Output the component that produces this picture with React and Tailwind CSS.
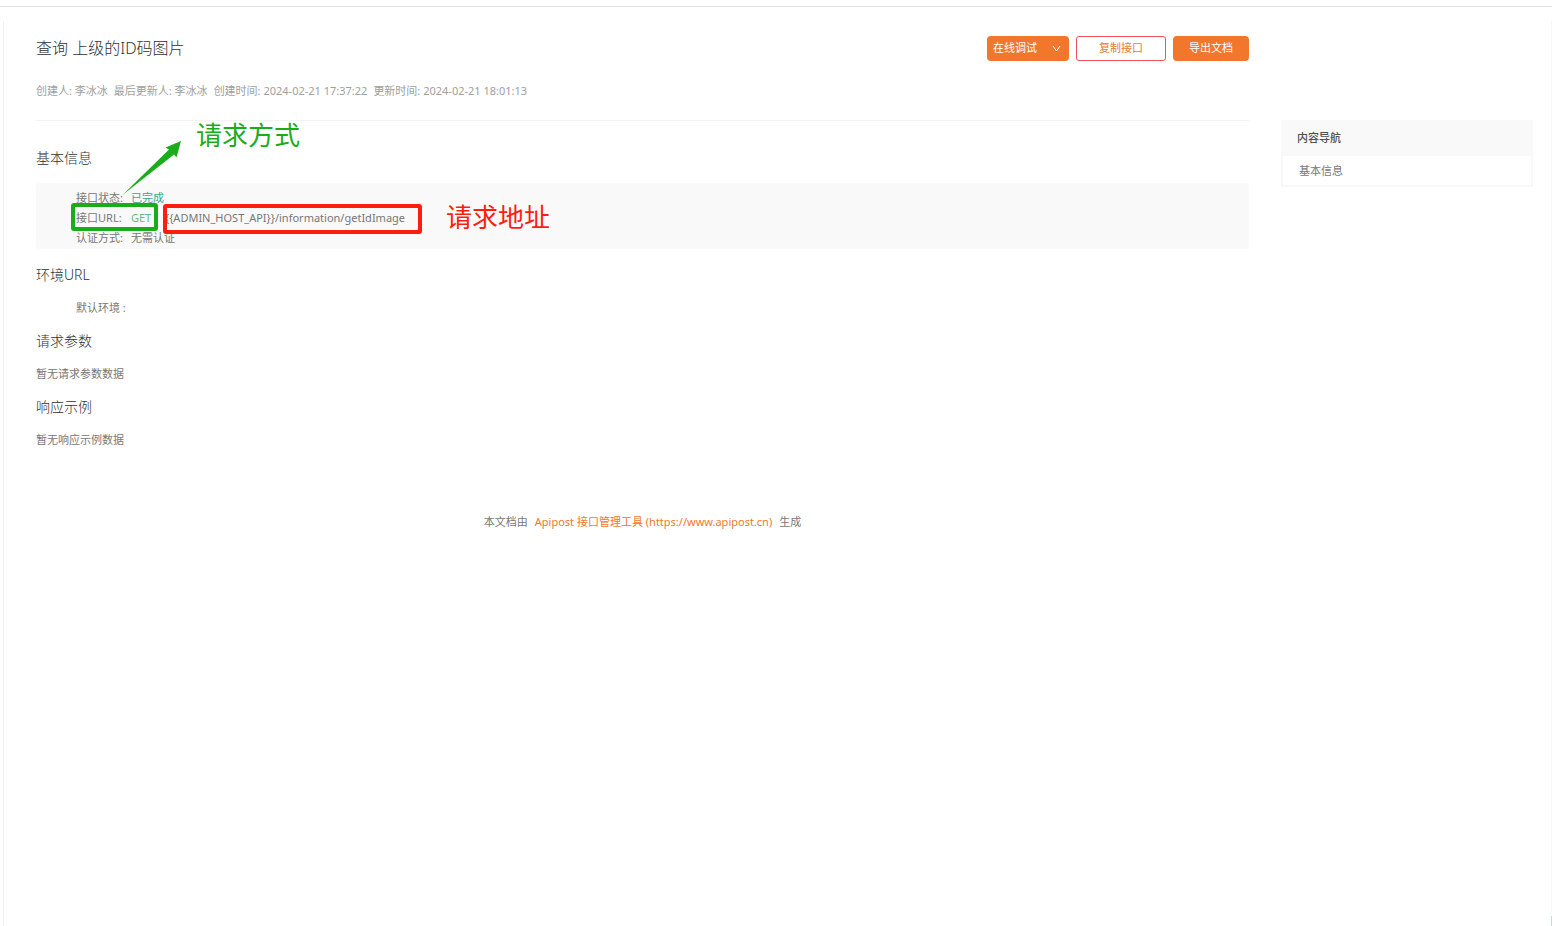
function Section({ title, children }) {
  return (
    <section className="leading-[33px]">
      <h2 className="text-sm font-light leading-[33px] text-[#303030]">{title}</h2>
      {children}
    </section>
  );
}

function InfoRow({ label, children }) {
  return (
    <div className="flex h-5">
      <dt className="w-[55px] shrink-0">{label}:</dt>
      <dd className="flex">{children}</dd>
    </div>
  );
}

function Annotations() {
  return (
    <>
      <span className="absolute left-[35px] top-5 h-7 w-[87px] rounded-[3px] border-4 border-[#1aad19]" />
      <span className="absolute left-[127px] top-[21px] h-[30px] w-[259px] rounded-[3px] border-4 border-[#ff1d10]" />
      <svg
        className="absolute left-[86px] -top-11 text-[#1aad19]"
        width="62"
        height="58"
        viewBox="0 0 62 58"
        fill="currentColor"
        aria-hidden="true"
      >
        <path d="M59 2 L43.5 8.5 L47 10.5 L0.5 56 L52 15.5 L54.5 18.5 Z" />
      </svg>
      <span className="absolute left-40 -top-16 whitespace-nowrap text-[26px] leading-8 text-[#1aad19]">
        请求方式
      </span>
      <span className="absolute left-[410px] top-[18px] whitespace-nowrap text-[26px] leading-8 text-[#ff1d10]">
        请求地址
      </span>
    </>
  );
}

export default function App() {
  return (
    <div className="relative flex min-h-screen flex-col bg-white pl-[3px] font-['Noto_Sans','Noto_Sans_CJK_SC',sans-serif] text-[11px] text-[#777]">
      <div className="-ml-[3px] mb-3.5 h-[7px] border-b border-[#e0e0e0]" />
      <div className="flex flex-1 items-start gap-8 border-x border-l-[#f2f2f2] border-r-[#f7f7f7] pl-8 pr-[18px] pt-[15px]">
        <main className="min-w-0 flex-1">
          <header className="border-b border-[#f2f3f5] pb-[19px]">
            <div className="flex h-[25px] items-start justify-between">
              <h1 className="text-base font-light leading-6 text-[#303030]">查询 上级的ID码图片</h1>
              <div className="flex gap-[7px]">
                <button
                  type="button"
                  className="flex h-[25px] w-[82px] items-center justify-between rounded bg-[#f0772b] pl-1.5 pr-2 text-white"
                >
                  在线调试
                  <svg width="9" height="9" viewBox="0 0 9 9" fill="none" stroke="currentColor" aria-hidden="true">
                    <path d="M1 2 L4.5 7 L8 2" />
                  </svg>
                </button>
                <button
                  type="button"
                  className="h-[25px] w-[90px] rounded-[3px] border border-[#f0525a] text-[#f0772b]"
                >
                  复制接口
                </button>
                <button type="button" className="h-[25px] w-[76px] rounded bg-[#f0772b] text-white">
                  导出文档
                </button>
              </div>
            </div>
            <div className="mt-5 flex gap-1.5 leading-5 text-[#a0a0a0]">
              <span>创建人: 李冰冰</span>
              <span>最后更新人: 李冰冰</span>
              <span>创建时间: 2024-02-21 17:37:22</span>
              <span>更新时间: 2024-02-21 18:01:13</span>
            </div>
          </header>

          <h2 className="mt-5 text-sm font-light leading-[33px] text-[#303030]">基本信息</h2>
          <div className="relative mb-[9px] mt-[9px] rounded bg-[#f9f9f9] pb-px pl-10 pt-[5px]">
            <dl className="leading-5">
              <InfoRow label="接口状态">
                <span className="text-[#3ba48d]">已完成</span>
              </InfoRow>
              <InfoRow label="接口URL">
                <span className="w-[34px] text-[#6aba7c]">GET</span>
                <span>{"{{ADMIN_HOST_API}}/information/getIdImage"}</span>
              </InfoRow>
              <InfoRow label="认证方式">无需认证</InfoRow>
            </dl>
            <Annotations />
          </div>

          <Section title="环境URL">
            <p className="pl-10">默认环境 :</p>
          </Section>
          <Section title="请求参数">
            <p>暂无请求参数数据</p>
          </Section>
          <Section title="响应示例">
            <p>暂无响应示例数据</p>
          </Section>

          <footer className="mt-14 flex justify-center gap-[7px] leading-5">
            <span>本文档由</span>
            <a href="https://www.apipost.cn" className="text-[#f0772b]">
              Apipost 接口管理工具 (https://www.apipost.cn)
            </a>
            <span>生成</span>
          </footer>
        </main>

        <aside className="mt-[84px] w-[252px] shrink-0 border-2 border-t-0 border-[#f9f9f9]">
          <h2 className="bg-[#f9f9f9] px-3.5 text-[11px] font-medium leading-9 text-[#505050]">
            内容导航
          </h2>
          <nav>
            <a href="#" className="block px-4 leading-[29px]">
              基本信息
            </a>
          </nav>
        </aside>
      </div>
      <span className="absolute bottom-0 right-0 h-2.5 w-px bg-[#c9dadd]" />
    </div>
  );
}
